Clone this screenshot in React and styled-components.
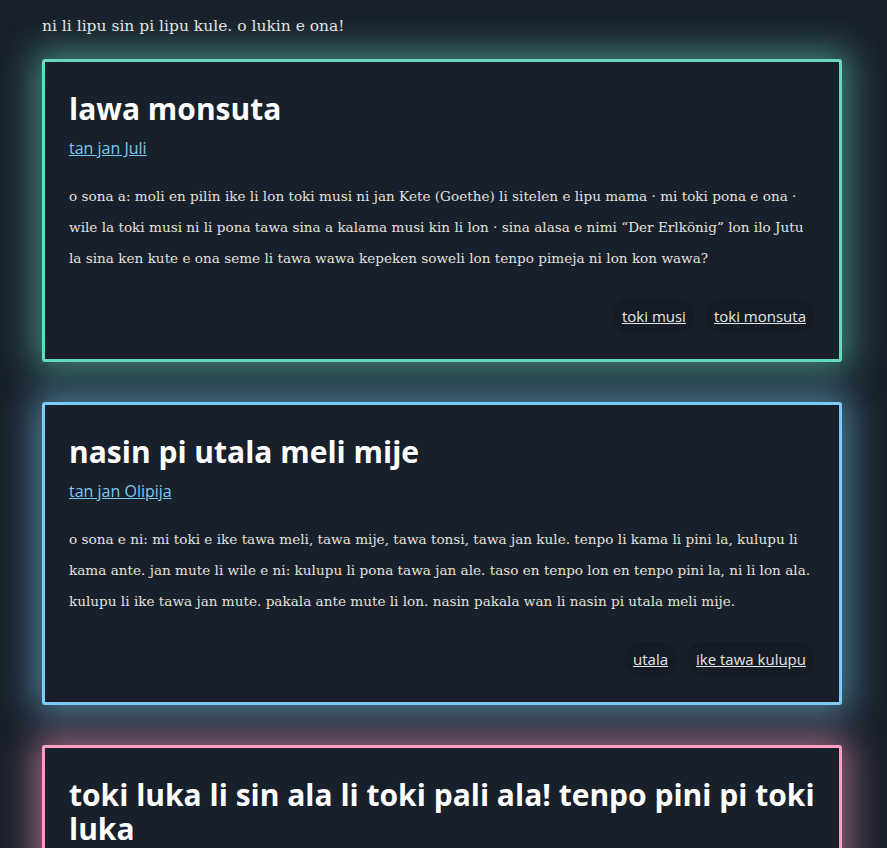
import React from "react";
import styled, { createGlobalStyle } from "styled-components";

const Global = createGlobalStyle`
  html, body { margin: 0; padding: 0; background: #19212b; }
  body { font-family: "DejaVu Serif", serif; color: #e4e4e4; }
`;

const Page = styled.main`
  width: 800px;
  margin: 0 0 0 42px;
  padding: 14px 0 40px;
  display: flex;
  flex-direction: column;
`;

const Intro = styled.p`
  margin: 0 0 21px;
  font-family: "DejaVu Serif", serif;
  font-size: 15.5px;
  line-height: 24px;
  color: #e4e4e4;
`;

const List = styled.div`
  display: flex;
  flex-direction: column;
  gap: 40px;
`;

const Card = styled.article`
  border: 3px solid ${(p) => p.$c};
  border-radius: 3px;
  background: #18202b;
  box-shadow: 0 0 34px 8px ${(p) => p.$c}88;
  padding: 24px 24px 26px;
  display: flex;
  flex-direction: column;
`;

const Title = styled.h2`
  margin: 6px 0 0;
  font-family: "Open Sans", sans-serif;
  font-weight: 700;
  font-size: 30px;
  line-height: 34px;
  color: #ffffff;
`;

const Author = styled.a`
  align-self: flex-start;
  margin-top: 11px;
  font-family: "Open Sans", sans-serif;
  font-size: 16px;
  line-height: 22px;
  color: #7cc8f0;
  text-decoration: underline;
`;

const Body = styled.p`
  margin: 22px 0 0;
  font-family: "DejaVu Serif", serif;
  font-size: 13.6px;
  line-height: 31px;
  color: #e2e0dc;
`;

const Tags = styled.div`
  display: flex;
  justify-content: flex-end;
  gap: 10px;
  margin-top: 25px;
`;

const Tag = styled.a`
  background: #151c25;
  border-radius: 18px;
  padding: 6px 9px;
  font-family: "Open Sans", sans-serif;
  font-size: 15px;
  line-height: 22px;
  color: #e6e6e6;
  text-decoration: underline;
`;

const posts = [
  {
    c: "#66dabb",
    title: "lawa monsuta",
    author: "tan jan Juli ",
    body:
      "o sona a: moli en pilin ike li lon toki musi ni jan Kete (Goethe) li sitelen e lipu mama · mi toki pona e ona · wile la toki musi ni li pona tawa sina a kalama musi kin li lon · sina alasa e nimi “Der Erlkönig” lon ilo Jutu la sina ken kute e ona seme li tawa wawa kepeken soweli lon tenpo pimeja ni lon kon wawa?",
    tags: ["toki musi", "toki monsuta"],
  },
  {
    c: "#7dccf7",
    title: "nasin pi utala meli mije",
    author: "tan jan Olipija ",
    body:
      "o sona e ni: mi toki e ike tawa meli, tawa mije, tawa tonsi, tawa jan kule. tenpo li kama li pini la, kulupu li kama ante. jan mute li wile e ni: kulupu li pona tawa jan ale. taso en tenpo lon en tenpo pini la, ni li lon ala. kulupu li ike tawa jan mute. pakala ante mute li lon. nasin pakala wan li nasin pi utala meli mije.",
    tags: ["utala", "ike tawa kulupu"],
  },
  {
    c: "#ff9fc1",
    title: "toki luka li sin ala li toki pali ala! tenpo pini pi toki luka",
    author: "tan jan Kasi ",
    body:
      "o sona e ni: toki luka li toki lon. jan mute li kepeken ona lon ma ale. toki luka li kama tan jan mute tan tenpo pini suli.",
    tags: ["toki luka"],
  },
];

export default function App() {
  return (
    <>
      <Global />
      <Page>
        <Intro>ni li lipu sin pi lipu kule. o lukin e ona!</Intro>
        <List>
          {posts.map((p) => (
            <Card key={p.title} $c={p.c}>
              <Title>{p.title}</Title>
              <Author href="#">{p.author}</Author>
              <Body>{p.body}</Body>
              <Tags>
                {p.tags.map((t) => (
                  <Tag key={t} href="#">{t}</Tag>
                ))}
              </Tags>
            </Card>
          ))}
        </List>
      </Page>
    </>
  );
}
